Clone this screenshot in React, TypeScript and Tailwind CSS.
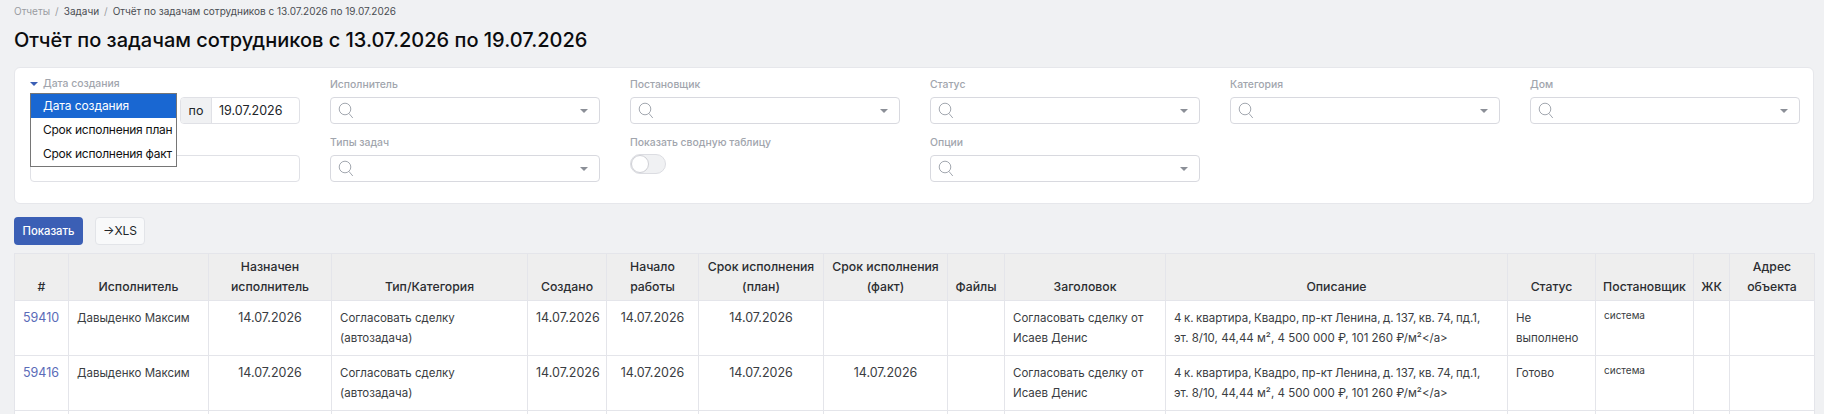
const columns = [
  { title: ["#"], width: "w-[54px]" },
  { title: ["Исполнитель"], width: "w-[140px]" },
  { title: ["Назначен", "исполнитель"], width: "w-[123px]" },
  { title: ["Тип/Категория"], width: "w-[196px]" },
  { title: ["Создано"], width: "w-[79px]" },
  { title: ["Начало", "работы"], width: "w-[92px]" },
  { title: ["Срок исполнения", "(план)"], width: "w-[125px]" },
  { title: ["Срок исполнения", "(факт)"], width: "w-[124px]" },
  { title: ["Файлы"], width: "w-[57px]" },
  { title: ["Заголовок"], width: "w-[161px]" },
  { title: ["Описание"], width: "w-[342px]" },
  { title: ["Статус"], width: "w-[88px]" },
  { title: ["Постановщик"], width: "w-[98px]" },
  { title: ["ЖК"], width: "w-[36px]" },
  { title: ["Адрес", "объекта"], width: "w-[85px]" },
];

const rows = [
  { id: "59410", fact: "", status: "Не выполнено" },
  { id: "59416", fact: "14.07.2026", status: "Готово" },
];

function SearchIcon() {
  return (
    <svg width="16" height="17" viewBox="0 0 16 17" fill="none" className="text-[#a3a8b0]">
      <circle cx="7" cy="7" r="5.8" stroke="currentColor" strokeWidth="1" />
      <path d="M11 11.5 L14.8 16" stroke="currentColor" strokeWidth="1" />
    </svg>
  );
}

function Caret({ className }: { className: string }) {
  return <span className={`border-x-[4px] border-t-[4px] border-x-transparent ${className}`} />;
}

function SelectField({ label }: { label: string }) {
  return (
    <div>
      <div className="h-4 mb-[5px] text-[10.4px] leading-[18px] font-medium text-[#a1a5ad]">{label}</div>
      <div className="flex items-center justify-between h-[27px] pl-[7px] pr-[11px] bg-white border border-[#d8d9df] rounded-[4px]">
        <SearchIcon />
        <Caret className="border-t-[#8b8f97]" />
      </div>
    </div>
  );
}

function DateField() {
  return (
    <div className="relative">
      <div className="flex items-center gap-[5px] h-4 mb-[5px] text-[10.4px] leading-[18px] font-medium text-[#a1a5ad]">
        <Caret className="border-t-[#3b5fb5]" />
        Дата создания
      </div>
      <div className="flex justify-end h-[27px]">
        <div className="flex w-[120px] border border-[#e0e1e6] rounded-[4px] overflow-hidden text-[12.5px] text-[#212529]">
          <span className="flex items-center justify-center w-[31px] bg-[#f0f1f3] border-r border-[#e0e1e6]">по</span>
          <span className="flex items-center pl-[7px]">19.07.2026</span>
        </div>
      </div>
      <div className="mt-[31px] h-[27px] bg-white border border-[#e0e1e6] rounded-[4px]" />
      <div className="absolute left-0 top-[17px] w-[147px] bg-white border border-[#767676] text-xs leading-6 tracking-[-0.25px] text-[#111]">
        <div className="h-6 pl-[12px] bg-[#1967d2] tracking-[-0.1px] text-white">Дата создания</div>
        <div className="h-6 pl-[12px] whitespace-nowrap">Срок исполнения план</div>
        <div className="h-6 pl-[12px] whitespace-nowrap">Срок исполнения факт</div>
      </div>
    </div>
  );
}

function ToggleField() {
  return (
    <div>
      <div className="h-4 mb-[4px] text-[10.4px] leading-[18px] font-medium text-[#a1a5ad]">Показать сводную таблицу</div>
      <div className="w-9 h-[20px] bg-[#f0f1f3] border border-[#dcdde2] rounded-full">
        <div className="w-[18px] h-[18px] bg-white border border-[#cfd0d5] rounded-full" />
      </div>
    </div>
  );
}

const td = "px-2 py-[7px] border border-[#e4e5ea] align-top";
const textTd = `${td} text-[11.5px]`;
const dateTd = `${td} text-center text-[12.5px]`;

export default function App() {
  return (
    <div className="h-[414px] overflow-hidden bg-[#f0f1f3] pl-[14px] pr-[10px] font-['Inter',sans-serif] text-xs leading-5 text-[#3a3d42]">
      <div className="flex gap-[5px] pt-1 h-[22px] text-[10px] leading-[14px]">
        <span className="text-[#9a9ca1]">Отчеты</span>
        <span className="text-[#9a9ca1]">/</span>
        <span className="text-[#4a4d52]">Задачи</span>
        <span className="text-[#9a9ca1]">/</span>
        <span className="text-[#4a4d52]">Отчёт по задачам сотрудников с 13.07.2026 по 19.07.2026</span>
      </div>
      <h1 className="mt-[6px] h-[39px] text-xl leading-6 font-medium text-[#0b0c0e]">
        Отчёт по задачам сотрудников с 13.07.2026 по 19.07.2026
      </h1>

      <div className="w-[1800px] h-[137px] pl-[15px] pr-[13px] pt-2 bg-white border border-[#e6e7eb] rounded-[6px]">
        <div className="grid grid-cols-6 gap-x-[30px] gap-y-[10px]">
          <div className="row-span-2">
            <DateField />
          </div>
          <SelectField label="Исполнитель" />
          <SelectField label="Постановщик" />
          <SelectField label="Статус" />
          <SelectField label="Категория" />
          <SelectField label="Дом" />
          <SelectField label="Типы задач" />
          <ToggleField />
          <SelectField label="Опции" />
        </div>
      </div>

      <div className="flex gap-3 mt-[13px] mb-2">
        <button className="h-7 w-[69px] bg-[#3b5fb5] rounded-[4px] text-[11.3px] font-medium text-white">Показать</button>
        <button className="h-7 w-[50px] bg-[#f8f9fa] border border-[#e2e4e8] rounded-[4px] text-xs text-[#212529]">→XLS</button>
      </div>

      <table className="w-[1800px] table-fixed border-collapse">
        <colgroup>
          {columns.map((c) => (
            <col key={c.title.join(" ")} className={c.width} />
          ))}
        </colgroup>
        <thead>
          <tr className="bg-[#eeeeee]">
            {columns.map((c) => (
              <th
                key={c.title.join(" ")}
                className="px-0 py-[3px] border border-[#e4e5ea] align-bottom text-center text-[12.25px] leading-5 font-medium text-[#2b2d31]"
              >
                {c.title.map((line) => (
                  <div key={line} className="whitespace-nowrap">{line}</div>
                ))}
              </th>
            ))}
          </tr>
        </thead>
        <tbody className="bg-white">
          {rows.map((r) => (
            <tr key={r.id} className="h-[55px]">
              <td className={`${td} text-[12.5px]`}><a className="text-[#5a6bb8]">{r.id}</a></td>
              <td className={textTd}>Давыденко Максим</td>
              <td className={dateTd}>14.07.2026</td>
              <td className={textTd}>Согласовать сделку (автозадача)</td>
              <td className={dateTd}>14.07.2026</td>
              <td className={dateTd}>14.07.2026</td>
              <td className={dateTd}>14.07.2026</td>
              <td className={dateTd}>{r.fact}</td>
              <td className={td} />
              <td className={textTd}>Согласовать сделку от Исаев Денис</td>
              <td className={textTd}>
                <div className="whitespace-nowrap [word-spacing:-0.7px]">4 к. квартира, Квадро, пр-кт Ленина, д. 137, кв. 74, пд.1,</div>
                <div className="whitespace-nowrap">эт. 8/10, 44,44 м², 4 500 000 ₽, 101 260 ₽/м²&lt;/a&gt;</div>
              </td>
              <td className={textTd}>{r.status}</td>
              <td className={`${td} text-[10px] leading-[14px]`}>система</td>
              <td className={td} />
              <td className={td} />
            </tr>
          ))}
          <tr className="h-[55px]">
            {columns.map((c) => (
              <td key={c.title.join(" ")} className={td} />
            ))}
          </tr>
        </tbody>
      </table>
    </div>
  );
}
